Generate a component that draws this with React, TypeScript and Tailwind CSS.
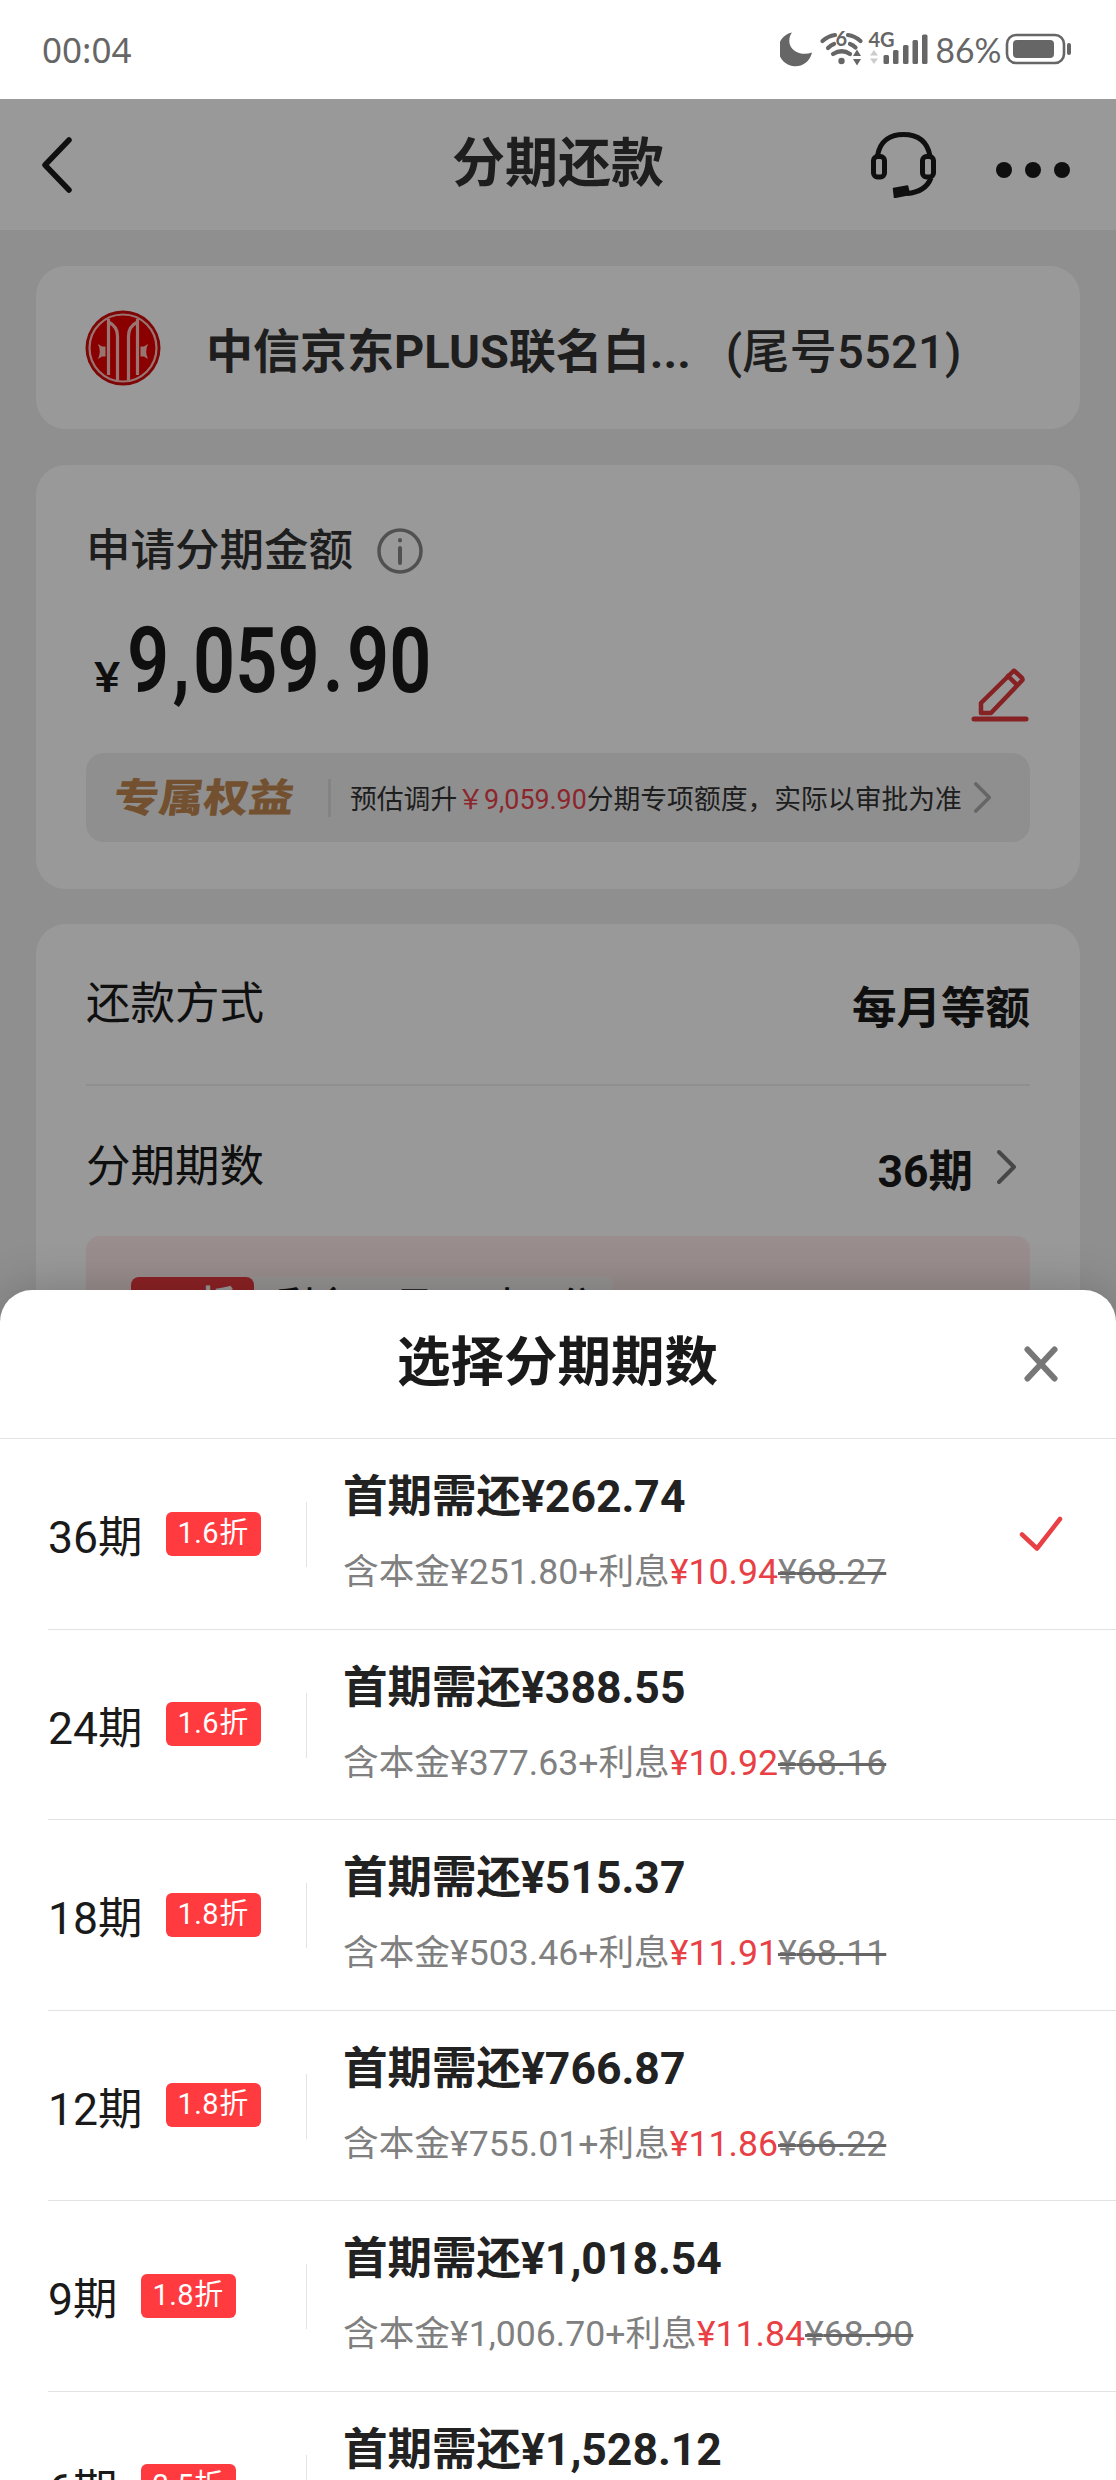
import type { ReactNode } from "react";

type Plan = {
  term: string;
  discount: string;
  first: string;
  detail?: { principal: string; interest: string; original: string };
};

const plans: Plan[] = [
  { term: "36期", discount: "1.6折", first: "262.74", detail: { principal: "251.80", interest: "10.94", original: "68.27" } },
  { term: "24期", discount: "1.6折", first: "388.55", detail: { principal: "377.63", interest: "10.92", original: "68.16" } },
  { term: "18期", discount: "1.8折", first: "515.37", detail: { principal: "503.46", interest: "11.91", original: "68.11" } },
  { term: "12期", discount: "1.8折", first: "766.87", detail: { principal: "755.01", interest: "11.86", original: "66.22" } },
  { term: "9期", discount: "1.8折", first: "1,018.54", detail: { principal: "1,006.70", interest: "11.84", original: "68.90" } },
  { term: "6期", discount: "2.5折", first: "1,528.12" },
];

function StatusIcons() {
  return (
    <svg className="h-[99px] w-[336px]" viewBox="780 0 336 99" fill="#666">
      <path d="M792 32.500A17 17 0 1 0 812 52.500C803 56 793 52.500 790 45C788.500 40.500 789.500 36 792 32.500Z" />
      <g fill="none" stroke="#666" strokeWidth="4.200" strokeLinecap="round">
        <path d="M822.500 41Q828 36 835 35" />
        <path d="M848 35Q855 36 860.500 41" />
        <path d="M828 48Q831 45 834 44" />
        <path d="M850 44Q853 45 855.500 47.500" />
        <path d="M833 54Q842 48.500 850 54" />
      </g>
      <circle cx="841.500" cy="61" r="3.200" />
      <path d="M857 49.500l4 6.500h-8zM857 65.500l4-6.500h-8z" />
      <text x="835.500" y="46" fontSize="20" fontWeight="700" fontFamily="Lato, sans-serif">6</text>
      <text x="868.500" y="46.500" fontSize="20" fontWeight="700" fontFamily="Lato, sans-serif">4G</text>
      <path fill="#ccc" d="M874 50l4 5.500h-8zM874 64l4-5.500h-8z" />
      <rect x="883.500" y="55" width="5.500" height="9" rx="1.500" />
      <rect x="893" y="50" width="5.500" height="14" rx="1.500" />
      <rect x="903" y="45" width="5.500" height="19" rx="1.500" />
      <rect x="912.500" y="40" width="5.500" height="24" rx="1.500" />
      <rect x="922" y="34.500" width="5.500" height="29.500" rx="1.500" />
      <text x="935.500" y="63" fontSize="34.500" fontFamily="Lato, sans-serif" textLength="66" lengthAdjust="spacingAndGlyphs">86%</text>
      <rect x="1007" y="35" width="57" height="28" rx="9" fill="none" stroke="#666" strokeWidth="2.600" />
      <rect x="1013" y="40" width="41" height="18" rx="4" />
      <rect x="1067" y="43" width="4" height="12" rx="2" />
    </svg>
  );
}

function HeadsetIcon() {
  return (
    <svg className="h-[66px] w-[66px]" viewBox="0 0 66 66" fill="none" stroke="#1a1a1a" strokeWidth="5">
      <path d="M6.500 24C9 8 20 2.500 32.500 2.500S56 8 59 24" />
      <rect x="2.500" y="24.500" width="11" height="20.500" rx="4" />
      <rect x="51.500" y="24.500" width="11" height="20.500" rx="4" />
      <path d="M60 46C56 56 48 60.500 36 61.500" />
      <path d="M22.500 56.500l14-2.500 2 8.500-15 3z" fill="#1a1a1a" stroke="#1a1a1a" strokeWidth="1.500" strokeLinejoin="round" />
    </svg>
  );
}

function BankLogo() {
  return (
    <svg className="h-[76px] w-[76px]" viewBox="0 0 76 76">
      <circle cx="38" cy="38" r="37.500" fill="#d40a0a" />
      <circle cx="38" cy="38" r="33.500" fill="#e60000" stroke="#ffc4bc" strokeWidth="2.200" />
      <g fill="none" stroke="#ffc4bc" strokeWidth="3.200">
        <path d="M23.500 9v56M23.500 12c6 3 9 8 9 14v44" />
        <path d="M52.500 9v56M52.500 12c-6 3-9 8-9 14v44" />
      </g>
      <path fill="#ffc4bc" d="M13 34l4 2.500h3.500v10H17L13 49q3.500-7.500 0-15zM63 34l-4 2.500h-3.500v10H59l4 2.500q-3.500-7.500 0-15z" />
    </svg>
  );
}

function EditIcon() {
  return (
    <svg className="h-[56px] w-[58px]" viewBox="0 0 58 56" fill="none" stroke="#e0383c" strokeWidth="4.500" strokeLinejoin="round" strokeLinecap="round">
      <path d="M10 46V36L42 4.500Q43 3.500 44 4.500L51 11Q52 12.500 51 13.500L20 46Z" />
      <path d="M37 9l9 9" />
      <path strokeWidth="5" d="M3 52h52" />
    </svg>
  );
}

function Chevron({ className }: { className: string }) {
  return (
    <svg className={className} viewBox="0 0 20 34" fill="none" stroke="currentColor" strokeWidth="4" strokeLinecap="round" strokeLinejoin="round">
      <path d="M2 2l15 15L2 32" />
    </svg>
  );
}

function Card({ className, children }: { className: string; children: ReactNode }) {
  return <section className={`mx-9 rounded-[30px] bg-white ${className}`}>{children}</section>;
}

function PlanRow({ plan, selected }: { plan: Plan; selected: boolean }) {
  return (
    <li className="ml-12 flex h-[190.500px] items-start border-b border-[#e3e3e3]">
      <div className="flex h-full w-[258px] shrink-0 items-center gap-[23px]">
        <span className="mt-[9px] text-[44.500px] leading-[60px]">{plan.term}</span>
        <span className="flex h-11 w-[95px] items-center justify-center rounded-md bg-[#ff3b3f] pb-[1px] text-[29px] tracking-[0.500px] text-white">
          {plan.discount}
        </span>
      </div>
      <div className="mt-[63px] h-[65px] w-px shrink-0 bg-[#e3e3e3]" />
      <div className="ml-[36px] grow whitespace-nowrap pt-[28px]">
        <p className="text-[44.500px] font-bold leading-[60px] text-[#222]">首期需还¥{plan.first}</p>
        {plan.detail && (
          <p className="mt-[20px] text-[35.650px] leading-[50px] text-[#808080]">
            含本金¥{plan.detail.principal}+利息<span className="text-[#e84045]">¥{plan.detail.interest}</span>
            <span className="line-through decoration-[#666] decoration-[3px]">¥{plan.detail.original}</span>
          </p>
        )}
      </div>
      {selected && (
        <svg className="mr-[53px] mt-[77px] h-9 w-[44px]" viewBox="0 0 44 36" fill="none" stroke="#e84045" strokeWidth="4.500" strokeLinecap="round" strokeLinejoin="round">
          <path d="M3 18.500l15 14L41 3" />
        </svg>
      )}
    </li>
  );
}

export default function App() {
  return (
    <div className="relative flex h-[2480px] w-[1116px] flex-col overflow-hidden bg-white font-['Roboto','Noto_Sans_CJK_SC',sans-serif] text-[#1a1a1a]">
      <div className="flex h-[99px] shrink-0 items-center justify-between pl-[42px]">
        <span className="pt-[2px] font-['Noto_Sans','Noto_Sans_CJK_SC',sans-serif] text-[35px] text-[#666]">00:04</span>
        <StatusIcons />
      </div>

      <main className="relative grow bg-[#efefef]">
        <header className="flex h-[131px] items-center bg-white">
          <svg className="ml-10 h-[56px] w-8" viewBox="0 0 32 56" fill="none" stroke="#1a1a1a" strokeWidth="5.500" strokeLinecap="round" strokeLinejoin="round">
            <path d="M29 3L5 28l24 25" />
          </svg>
          <h1 className="ml-[380px] pb-[2px] text-[53px] font-bold leading-[60px] text-[#333]">分期还款</h1>
          <div className="ml-[207px]">
            <HeadsetIcon />
          </div>
          <div className="ml-[59px] mt-[10px] flex gap-[13px]">
            <i className="size-4 rounded-full bg-[#1a1a1a]" />
            <i className="size-4 rounded-full bg-[#1a1a1a]" />
            <i className="size-4 rounded-full bg-[#1a1a1a]" />
          </div>
        </header>

        <Card className="mt-[36px] flex h-[163px] items-center pl-[49px] text-[47px] text-[#333]">
          <BankLogo />
          <span className="ml-[45px] pt-[9px] font-bold">中信京东PLUS联名白...</span>
          <span className="ml-[35px] pt-[9px] font-medium tracking-[0.300px]">(尾号5521)</span>
        </Card>

        <Card className="mt-[36px] h-[424px] px-[50px] pt-[53px]">
          <div className="flex items-center gap-[24px]">
            <h2 className="pt-px text-[44.500px] font-medium leading-[64px] text-[#333]">申请分期金额</h2>
            <svg className="h-[46px] w-[46px]" viewBox="0 0 46 46" fill="none" stroke="#888" strokeWidth="3.500" strokeLinecap="round">
              <circle cx="23" cy="23" r="21" />
              <path strokeWidth="4" d="M23 20v15M23 12v.500" />
            </svg>
          </div>
          <div className="flex h-[170px] items-start justify-between">
            <div className="flex items-baseline pl-[8px] pt-[34px]">
              <span className="w-[29px] origin-left scale-x-[1.150] text-[43px] font-medium">¥</span>
              <span className="ml-[4px] origin-left scale-x-[0.820] text-[90px] font-semibold leading-[90px]">
                9<span className="mx-[4px]">,</span>059<span className="mx-[4px]">.</span>90
              </span>
            </div>
            <div className="mr-px mt-[84px] shrink-0">
              <EditIcon />
            </div>
          </div>
          <div className="flex h-[89px] items-center rounded-[18px] bg-[#efefef] text-[26.800px] text-[#333]">
            <span className="ml-7 -skew-x-6 scale-y-[0.880] pt-[2px] text-[45px] font-black leading-none text-[#c08850]">专属权益</span>
            <span className="ml-[34px] h-[38px] w-[3px] bg-[#ddd]" />
            <span className="ml-[19px] whitespace-nowrap pt-[6px]">
              预估调升<span className="text-[#e9404a]">￥9,059.90</span>分期专项额度，实际以审批为准
            </span>
            <Chevron className="ml-3 h-[31px] w-[18px] text-[#aaa]" />
          </div>
        </Card>

        <Card className="mt-[35px] h-[600px] px-[50px] text-[44.500px]">
          <div className="flex h-[162px] items-center justify-between border-b-2 border-[#efefef]">
            <span>还款方式</span>
            <span className="pt-[10px] font-bold">每月等额</span>
          </div>
          <div className="flex h-[150px] items-center">
            <span className="grow pt-3">分期期数</span>
            <span className="pt-[22px] font-bold">36期</span>
            <Chevron className="ml-[24px] mr-[13px] mt-3 h-[36px] w-[20px] text-[#777]" />
          </div>
          <div className="flex h-[200px] items-start rounded-[14px] bg-[#ffeceb] pt-[41px]">
            <div className="ml-[45px] flex h-[60px] w-[482px] items-center rounded-lg bg-[#f8f4f3] text-[38px]">
              <span className="flex h-[60px] w-[123px] items-center justify-center rounded-lg bg-[#e9393e] pb-1 text-[35px] font-bold text-white">1.6折</span>
              <span className="pb-[2px] pl-[22px] font-medium">剩余11日05时04分</span>
            </div>
          </div>
        </Card>
        <div className="absolute inset-0 bg-black/40" />
      </main>

      <div className="absolute inset-x-0 bottom-0 h-[1190px] rounded-t-[32px] bg-white shadow-[0_0_48px_rgba(0,0,0,0.220)]">
        <div className="flex h-[149px] items-center border-b border-[#e3e3e3]">
          <h2 className="ml-[397px] pb-[2px] text-[53.500px] font-bold leading-[60px]">选择分期期数</h2>
          <svg className="ml-[306px] h-9 w-[34px]" viewBox="0 0 34 36" fill="none" stroke="#777" strokeWidth="6" strokeLinecap="round">
            <path d="M3.500 3.500l27 29M30.500 3.500l-27 29" />
          </svg>
        </div>
        <ul className="h-[1041px] overflow-hidden">
          {plans.map((plan, i) => (
            <PlanRow key={plan.term} plan={plan} selected={i === 0} />
          ))}
        </ul>
      </div>
    </div>
  );
}
